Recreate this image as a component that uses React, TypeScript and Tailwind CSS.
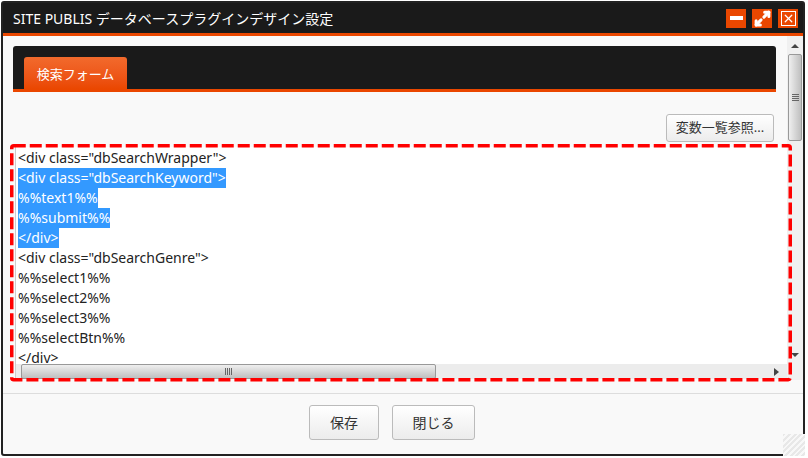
import { Maximize2, X } from "lucide-react";

const font = "font-['Noto_Sans','Noto_Sans_CJK_JP',sans-serif]";

const lines = [
  { text: '<div class="dbSearchWrapper">', selected: false },
  { text: '<div class="dbSearchKeyword">', selected: true },
  { text: "%%text1%%", selected: true },
  { text: "%%submit%%", selected: true },
  { text: "</div>", selected: true },
  { text: '<div class="dbSearchGenre">', selected: false },
  { text: "%%select1%%", selected: false },
  { text: "%%select2%%", selected: false },
  { text: "%%select3%%", selected: false },
  { text: "%%selectBtn%%", selected: false },
  { text: "</div>", selected: false },
];

const Grip = ({ vertical }: { vertical?: boolean }) => (
  <div className={vertical ? "flex flex-col gap-px" : "flex gap-px"}>
    {[0, 1, 2, 3].map((i) => (
      <div key={i} className={vertical ? "w-[7px] h-px bg-[#666]" : "w-px h-[7px] bg-[#666]"} />
    ))}
  </div>
);

const Button = ({ label, className }: { label: string; className: string }) => (
  <button
    className={`flex items-center justify-center rounded-[3px] border border-[#bbb] bg-gradient-to-b from-white to-[#ececec] text-[#333] text-[14px] ${className}`}
  >
    {label}
  </button>
);

const HeaderButton = ({ children }: { children: React.ReactNode }) => (
  <div className="flex h-[19px] w-5 items-center justify-center bg-[#ea4700] text-white">{children}</div>
);

export default function App() {
  return (
    <div className={`relative h-[458px] w-[808px] overflow-hidden bg-white ${font}`}>
      <div className="ml-[1px] mt-[1px] flex h-[455px] w-[804px] flex-col rounded-[3px] border-2 border-[#222] bg-[#f9f9f9]">
        {/* title bar */}
        <div className="flex h-[30px] shrink-0 items-center justify-between bg-[#1a1a1a] pl-[10px] pr-[5px]">
          <span className="text-[14px] text-white">SITE PUBLIS データベースプラグインデザイン設定</span>
          <div className="flex gap-[6px]">
            <HeaderButton>
              <div className="h-[4px] w-[13px] bg-white" />
            </HeaderButton>
            <HeaderButton>
              <Maximize2 size={17} strokeWidth={3} absoluteStrokeWidth />
            </HeaderButton>
            <HeaderButton>
              <div className="flex h-[15px] w-[15px] items-center justify-center border border-white">
                <X size={15} strokeWidth={1.5} absoluteStrokeWidth />
              </div>
            </HeaderButton>
          </div>
        </div>
        <div className="h-[3px] shrink-0 bg-[#ea4700]" />

        <div className="flex min-h-0 flex-1 flex-col">
          <div className="flex h-[344px] shrink-0">
            <div className="flex min-w-0 flex-1 flex-col pl-[10px] pt-[10px]">
              {/* tab bar */}
              <div className="mr-[11px] flex h-[46px] shrink-0 items-end rounded-t-[3px] border-b-[3px] border-[#ea4700] bg-[#1a1a1a] pl-[11px]">
                <div className="flex h-8 w-[103px] items-center justify-center rounded-t-[3px] bg-gradient-to-b from-[#f26a2c] to-[#ea4700] pt-[3px] text-[13px] text-white">
                  検索フォーム
                </div>
              </div>
              <div className="mr-[13px] mt-[22px] flex shrink-0 justify-end">
                <Button label="変数一覧参照..." className="h-[28px] w-[108px] !text-[13px]" />
              </div>
              {/* editor */}
              <div className="ml-[2px] mt-[5px] flex h-[232px] min-h-0 flex-col border-l border-[#ccc] bg-white">
                <div className="min-h-0 flex-1 overflow-hidden pl-[2px] pt-[1px]">
                  {lines.map((line, index) => (
                    <div key={index} className="h-5 text-[14px] leading-5 text-[#222]">
                      <span className={line.selected ? "inline-block h-5 bg-[#3399ff] text-white" : "inline-block h-5"}>
                        {line.text}
                      </span>
                    </div>
                  ))}
                </div>
                <div className="flex h-[15px] shrink-0 items-center bg-[#ececec]">
                  <div className="ml-[5px] flex h-[15px] w-[415px] items-center justify-center rounded-[2px] border border-[#999] bg-gradient-to-b from-[#efefef] to-[#bfbfbf]">
                    <Grip />
                  </div>
                  <div className="ml-auto mr-[8px] h-0 w-0 border-y-[4px] border-l-[5px] border-y-transparent border-l-[#444]" />
                </div>
              </div>
            </div>
            {/* page scrollbar */}
            <div className="flex w-[16px] shrink-0 flex-col items-center bg-[#f0f0f0]">
              <div className="mt-[8px] h-0 w-0 border-x-[4px] border-b-[4px] border-x-transparent border-b-[#444]" />
              <div className="mt-[6px] flex h-[87px] w-[14px] items-center justify-center rounded-[2px] border border-[#999] bg-gradient-to-r from-[#efefef] to-[#bfbfbf]">
                <Grip vertical />
              </div>
              <div className="mt-auto mb-[23px] h-0 w-0 border-x-[4px] border-t-[4px] border-x-transparent border-t-[#444]" />
            </div>
          </div>

          {/* footer */}
          <div className="mt-[13px] flex h-[60px] shrink-0 justify-center gap-[13px] border-t border-[#ddd] pr-[22px] pt-[11px]">
            <Button label="保存" className="h-[35px] w-[70px]" />
            <Button label="閉じる" className="h-[35px] w-[83px]" />
          </div>
        </div>
      </div>

      {/* annotation */}
      <svg className="absolute left-0 top-0" width="808" height="458" fill="none">
        <rect x="11.75" y="145.75" width="778.5" height="234" stroke="#ff0000" strokeWidth="3.5" strokeDasharray="12 4" rx="2" />
      </svg>

      {/* resize handle */}
      <div className="absolute left-[783px] top-[434px] h-[22px] w-[22px] bg-[repeating-linear-gradient(135deg,#e8e8e8_0px,#e8e8e8_2px,#f8f8f8_2px,#f8f8f8_4px)]" />
    </div>
  );
}
